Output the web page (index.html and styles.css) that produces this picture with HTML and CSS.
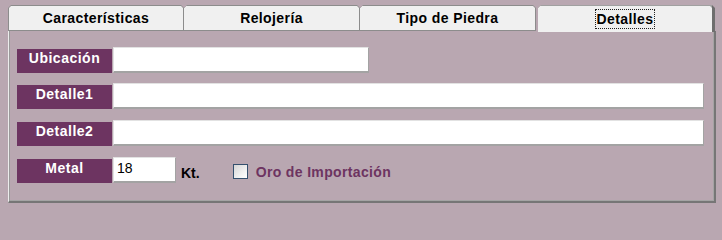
FILE: index.html
```html
<!DOCTYPE html>
<html lang="es">
<head>
<meta charset="utf-8">
<title>Detalles</title>
<link rel="stylesheet" href="styles.css">
</head>
<body>
<div class="window">
  <div class="tabs">
    <div class="tab"><div class="tab-face">Características</div></div>
    <div class="tab"><div class="tab-face">Relojería</div></div>
    <div class="tab"><div class="tab-face">Tipo de Piedra</div></div>
    <div class="tab tab-active"><div class="tab-face"><span class="focus">Detalles</span></div></div>
  </div>
  <div class="panel">
    <div class="row row-1">
      <div class="label">Ubicación</div>
      <div class="input input-short"></div>
    </div>
    <div class="row row-2">
      <div class="label">Detalle1</div>
      <div class="input input-long"></div>
    </div>
    <div class="row row-3">
      <div class="label">Detalle2</div>
      <div class="input input-long"></div>
    </div>
    <div class="row row-4">
      <div class="label">Metal</div>
      <div class="input input-metal">18</div>
      <div class="unit">Kt.</div>
      <div class="check-group">
        <span class="checkbox"></span>
        <span class="check-label">Oro de Importación</span>
      </div>
    </div>
  </div>
</div>
</body>
</html>
```
FILE: styles.css
```css
html, body {
  margin: 0;
  padding: 0;
}
body {
  background: #b9a7b1;
  font-family: "Liberation Sans", Arial, sans-serif;
  width: 722px;
  height: 208px;
  overflow: hidden;
}
.window {
  padding: 5px 0 0 8px;
}
.tabs {
  display: flex;
  align-items: flex-end;
  height: 26px;
}
.tab {
  width: 176px;
  height: 26px;
  box-sizing: border-box;
  padding: 1px 1px 1px 1px;
  background: #8c8c8c;
  clip-path: polygon(3px 0, calc(100% - 3px) 0, 100% 3px, 100% 100%, 0 100%, 0 3px);
}
.tab + .tab {
  padding-left: 0;
}
.tab-face {
  height: 100%;
  background: #f0f0f0;
  clip-path: polygon(2px 0, calc(100% - 2px) 0, 100% 2px, 100% 100%, 0 100%, 0 2px);
  text-align: center;
  font-weight: bold;
  font-size: 14px;
  letter-spacing: 0.4px;
  line-height: 24px;
  color: #000;
}
.tab-active {
  margin-left: 2px;
  width: 177px;
  height: 27px;
  margin-bottom: -1px;
  padding: 1px 3px 0 1px;
  background: linear-gradient(to right, #a0a0a0 0, #a0a0a0 calc(100% - 3px), #6e6e6e calc(100% - 3px));
  position: relative;
  z-index: 1;
}
.tab-active .tab-face {
  padding-top: 3px;
  box-sizing: border-box;
  line-height: 18px;
}
.focus {
  display: inline-block;
  border: 1px dotted #202020;
  padding: 0 1px;
  line-height: 18px;
}
.panel {
  width: 708px;
  height: 172px;
  box-sizing: border-box;
  border-left: 1px solid #ececec;
  border-right: 2px solid #767676;
  border-bottom: 2px solid #767676;
  box-shadow: inset 1px 0 0 #9a9a9a, inset -1px -1px 0 #a4a4a4;
  padding: 16px 0 0 8px;
}
.row {
  display: flex;
  align-items: flex-end;
  height: 26px;
}
.row-2 { margin-top: 10px; }
.row-3 { margin-top: 11px; }
.row-4 { margin-top: 11px; }
.label {
  width: 95px;
  height: 24px;
  box-sizing: border-box;
  background: #6d3461;
  color: #fff;
  font-weight: bold;
  font-size: 14px;
  letter-spacing: 0.5px;
  line-height: 19px;
  text-align: center;
}
.input {
  margin-left: 1px;
  height: 26px;
  box-sizing: border-box;
  background: #fff;
  border-top: 1px solid #e2e2e2;
  border-left: 1px solid #e2e2e2;
  border-right: 1px solid #a3a3a3;
  border-bottom: 2px solid #a3a3a3;
  font-size: 14px;
  line-height: 21px;
  padding-left: 3px;
  color: #000;
}
.input-short { width: 256px; }
.input-long { width: 591px; }
.input-metal { width: 63px; }
.unit {
  margin-left: 5px;
  margin-bottom: 2px;
  font-weight: bold;
  font-size: 14px;
  line-height: 16px;
  color: #000;
}
.check-group {
  display: flex;
  align-items: center;
  margin-left: 33px;
  margin-bottom: 4px;
  height: 16px;
}
.checkbox {
  width: 15px;
  height: 15px;
  box-sizing: border-box;
  border: 1px solid #34506e;
  background: linear-gradient(135deg, #d6d6d6 0%, #f4f4f4 70%, #ffffff 100%);
}
.check-label {
  margin-left: 8px;
  font-weight: bold;
  font-size: 14px;
  letter-spacing: 0.35px;
  line-height: 16px;
  padding-top: 2px;
  color: #6d3461;
}
```
